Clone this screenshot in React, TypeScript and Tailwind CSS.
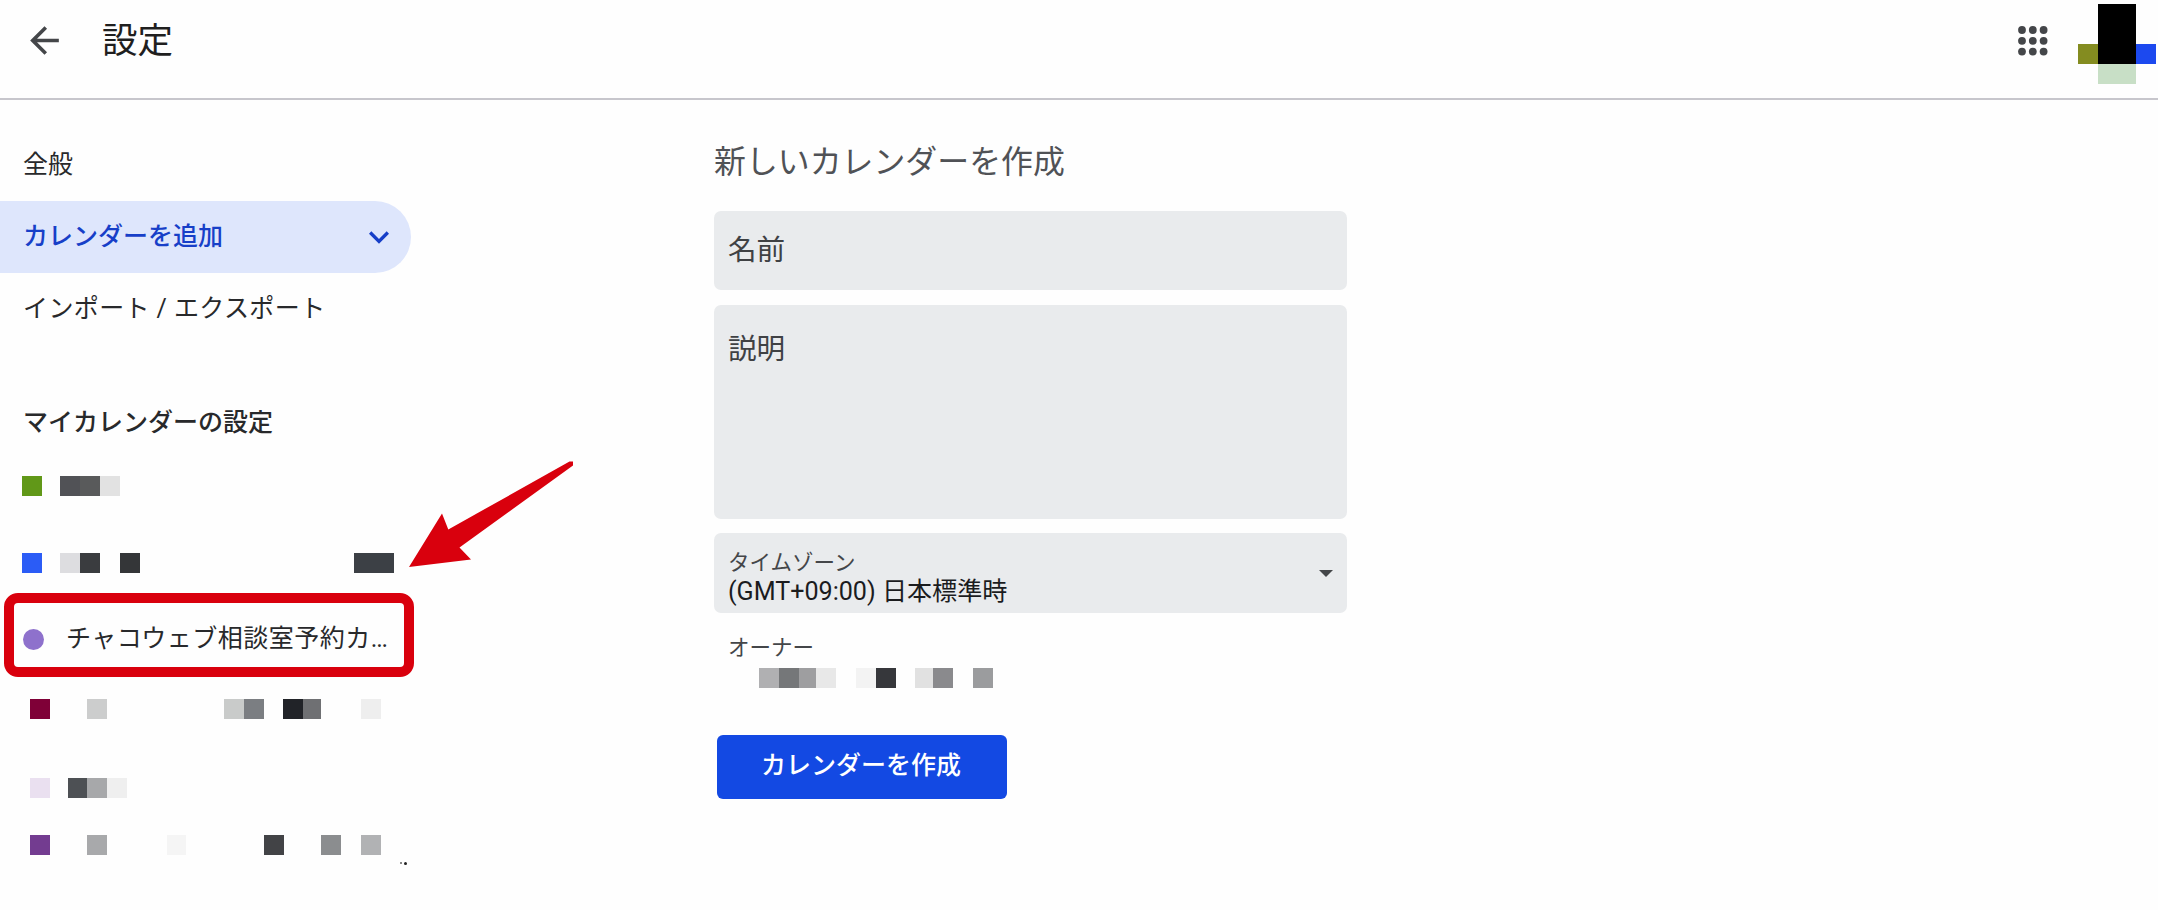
import clsx from 'clsx';

type Cell = { w: string; color?: string };

// One row of redacted content, drawn as a strip of flat blocks
function Mosaic({ cells, className }: { cells: Cell[]; className?: string }) {
  return (
    <div className={clsx('flex h-5', className)} aria-hidden="true">
      {cells.map((cell, i) => (
        <span key={i} className={clsx('h-full shrink-0', cell.w, cell.color)} />
      ))}
    </div>
  );
}

const calendarA: Cell[] = [
  { w: 'w-5', color: 'bg-[#619818]' },
  { w: 'w-[18px]' },
  { w: 'w-5', color: 'bg-[#515256]' },
  { w: 'w-5', color: 'bg-[#595a5b]' },
  { w: 'w-5', color: 'bg-[#e2e2e2]' },
];

const calendarB: Cell[] = [
  { w: 'w-5', color: 'bg-[#2b5cf6]' },
  { w: 'w-[18px]' },
  { w: 'w-5', color: 'bg-[#dddde0]' },
  { w: 'w-5', color: 'bg-[#3a3c3f]' },
  { w: 'w-5' },
  { w: 'w-5', color: 'bg-[#343638]' },
  { w: 'w-[214px]' },
  { w: 'w-10', color: 'bg-[#3c4045]' },
];

const calendarC: Cell[] = [
  { w: 'w-5', color: 'bg-[#7f0037]' },
  { w: 'w-[37px]' },
  { w: 'w-5', color: 'bg-[#cccdcd]' },
  { w: 'w-[117px]' },
  { w: 'w-5', color: 'bg-[#c9cbca]' },
  { w: 'w-5', color: 'bg-[#7b7e82]' },
  { w: 'w-[19px]' },
  { w: 'w-5', color: 'bg-[#212328]' },
  { w: 'w-[18px]', color: 'bg-[#6f7073]' },
  { w: 'w-10' },
  { w: 'w-5', color: 'bg-[#eeeeee]' },
];

const calendarD: Cell[] = [
  { w: 'w-5', color: 'bg-[#eae0f0]' },
  { w: 'w-[18px]' },
  { w: 'w-[19px]', color: 'bg-[#4d5054]' },
  { w: 'w-5', color: 'bg-[#a7a8aa]' },
  { w: 'w-5', color: 'bg-[#efefef]' },
];

const calendarE: Cell[] = [
  { w: 'w-5', color: 'bg-[#733c90]' },
  { w: 'w-[37px]' },
  { w: 'w-5', color: 'bg-[#a8a9ab]' },
  { w: 'w-[60px]' },
  { w: 'w-[19px]', color: 'bg-[#f5f5f5]' },
  { w: 'w-[78px]' },
  { w: 'w-5', color: 'bg-[#424346]' },
  { w: 'w-[37px]' },
  { w: 'w-5', color: 'bg-[#8b8d8f]' },
  { w: 'w-5' },
  { w: 'w-5', color: 'bg-[#b1b2b4]' },
];

const owner: Cell[] = [
  { w: 'w-5', color: 'bg-[#b0b0b2]' },
  { w: 'w-5', color: 'bg-[#757779]' },
  { w: 'w-[17px]', color: 'bg-[#9e9ea0]' },
  { w: 'w-5', color: 'bg-[#e8e8e8]' },
  { w: 'w-5' },
  { w: 'w-5', color: 'bg-[#f3f3f3]' },
  { w: 'w-5', color: 'bg-[#36373b]' },
  { w: 'w-[19px]' },
  { w: 'w-[18px]', color: 'bg-[#e1e1e1]' },
  { w: 'w-5', color: 'bg-[#8a8a8d]' },
  { w: 'w-5' },
  { w: 'w-5', color: 'bg-[#9b9c9e]' },
];

function Header() {
  return (
    <header className="flex h-[100px] items-start border-b-2 border-[#c7c6cc]">
      <button className="mt-[19px] ml-[23px]" aria-label="戻る">
        <svg className="size-[43px] fill-[#444649]" viewBox="0 0 24 24">
          <path d="M20 11H7.83l5.59-5.59L12 4l-8 8 8 8 1.41-1.41L7.83 13H20v-2z" />
        </svg>
      </button>
      <h1 className="mt-[17px] ml-9 text-[35.500px] leading-[48px] text-[#1f1f1f]">設定</h1>
      <button className="mt-[26px] ml-auto" aria-label="アプリ">
        <svg className="size-[30px] fill-[#444649]" viewBox="0 0 30 30">
          {[4, 14.8, 25.6].map((cy) =>
            [4, 14.8, 25.6].map((cx) => <circle key={`${cx}-${cy}`} cx={cx} cy={cy} r="3.9" />)
          )}
        </svg>
      </button>
      <div className="mt-1 mr-[2px] ml-[30px] flex">
        <span className="mt-10 h-5 w-5 bg-[#848c20]" />
        <span className="flex w-[38px] flex-col">
          <span className="h-[60px] bg-black" />
          <span className="h-5 bg-[#c8dfc6]" />
        </span>
        <span className="mt-10 h-5 w-5 bg-[#1c49ef]" />
      </div>
    </header>
  );
}

function Sidebar() {
  return (
    <aside className="relative w-[412px] shrink-0 pt-[29px] text-[25px] text-[#28292b]">
      <nav>
        <a className="flex h-18 items-center pl-[23px]">全般</a>
        <a className="mr-px flex h-18 items-center justify-between rounded-r-full bg-[#dee6fc] pr-3 pl-[23px] font-medium text-[#173fc8]">
          カレンダーを追加
          <svg className="size-10 fill-current" viewBox="0 0 24 24">
            <path d="M16.59 8.59L12 13.17 7.41 8.59 6 10l6 6 6-6z" />
          </svg>
        </a>
        <a className="flex h-18 items-center pl-[23px] tracking-[0.400px]">インポート / エクスポート</a>
      </nav>

      <h2 className="mt-[42px] flex h-18 items-center pl-[23px] font-medium">マイカレンダーの設定</h2>
      <Mosaic cells={calendarA} className="mt-[17px] ml-[22px]" />
      <Mosaic cells={calendarB} className="mt-[57px] ml-[22px]" />

      <div className="mt-5 ml-1 flex h-[84px] w-[410px] items-center rounded-[14px] border-[10px] border-[#d9000d] pl-[9px]">
        <span className="mt-[9px] size-[21px] shrink-0 rounded-full bg-[#8e71cc]" />
        <span className="mt-[7px] ml-[22px] tracking-[0.500px] whitespace-nowrap">
          チャコウェブ相談室予約カ<span className="tracking-[-1.200px]">...</span>
        </span>
      </div>

      <Mosaic cells={calendarC} className="mt-[22px] ml-[30px]" />
      <Mosaic cells={calendarD} className="mt-[59px] ml-[30px]" />
      <Mosaic cells={calendarE} className="mt-[37px] ml-[30px]" />
      <div className="mt-[6px] ml-[400px] flex h-1 items-center gap-[2px]">
        <span className="h-[2px] w-[2px] bg-[#888]" />
        <span className="size-[3px] rounded-full bg-[#222]" />
      </div>

      {/* Arrow pointing at the highlighted calendar */}
      <svg className="absolute top-[350px] left-[400px] h-[130px] w-[180px] fill-[#d9000d]" viewBox="0 0 180 130">
        <path d="M9 117L42 63.500L48.300 79.500L169.500 11.500L173 11.500L173 15.500L59.500 97.500L71 109.500Z" />
      </svg>
    </aside>
  );
}

function CreateCalendarForm() {
  return (
    <main className="ml-[302px] w-[633px] pt-[38px]">
      <h2 className="text-[31.900px] leading-[48px] text-[#505256]">新しいカレンダーを作成</h2>

      <div className="mt-[25px] h-[79px] rounded-[7px] bg-[#e9ebed] pt-[19px] pl-[14px] text-[28.600px] leading-10 text-[#3f4144]">
        名前
      </div>
      <div className="mt-[15px] h-[214px] rounded-[7px] bg-[#e9ebed] pt-6 pl-[14px] text-[28.600px] leading-10 text-[#3f4144]">
        説明
      </div>
      <div className="mt-[14px] flex h-20 items-center justify-between rounded-[7px] bg-[#e9ebed] pr-[14px] pl-[14px]">
        <div className="pt-[10px]">
          <p className="text-[21.500px] leading-7 text-[#444649]">タイムゾーン</p>
          <p className="text-[25.100px] leading-[30px] text-[#1b1c1e]">(GMT+09:00) 日本標準時</p>
        </div>
        <svg className="h-[7px] w-[14px] fill-[#444649]" viewBox="0 0 14 7">
          <path d="M0 0h14L7 7z" />
        </svg>
      </div>

      <p className="mt-[21px] pl-[14px] text-[21.500px] leading-7 text-[#444649]">オーナー</p>
      <Mosaic cells={owner} className="mt-[6px] ml-[45px]" />

      <button className="mt-[47px] ml-[3px] flex h-16 w-[290px] items-center justify-center rounded-[6px] bg-[#1349e3] pr-[2px] pb-[2px] text-[25px] font-medium text-white">
        カレンダーを作成
      </button>
    </main>
  );
}

export default function App() {
  return (
    <div
      lang="ja"
      className="h-[910px] w-[2158px] overflow-hidden bg-[#fefefe] font-['Roboto','Noto_Sans_CJK_JP',sans-serif]"
    >
      <Header />
      <div className="flex">
        <Sidebar />
        <CreateCalendarForm />
      </div>
    </div>
  );
}
